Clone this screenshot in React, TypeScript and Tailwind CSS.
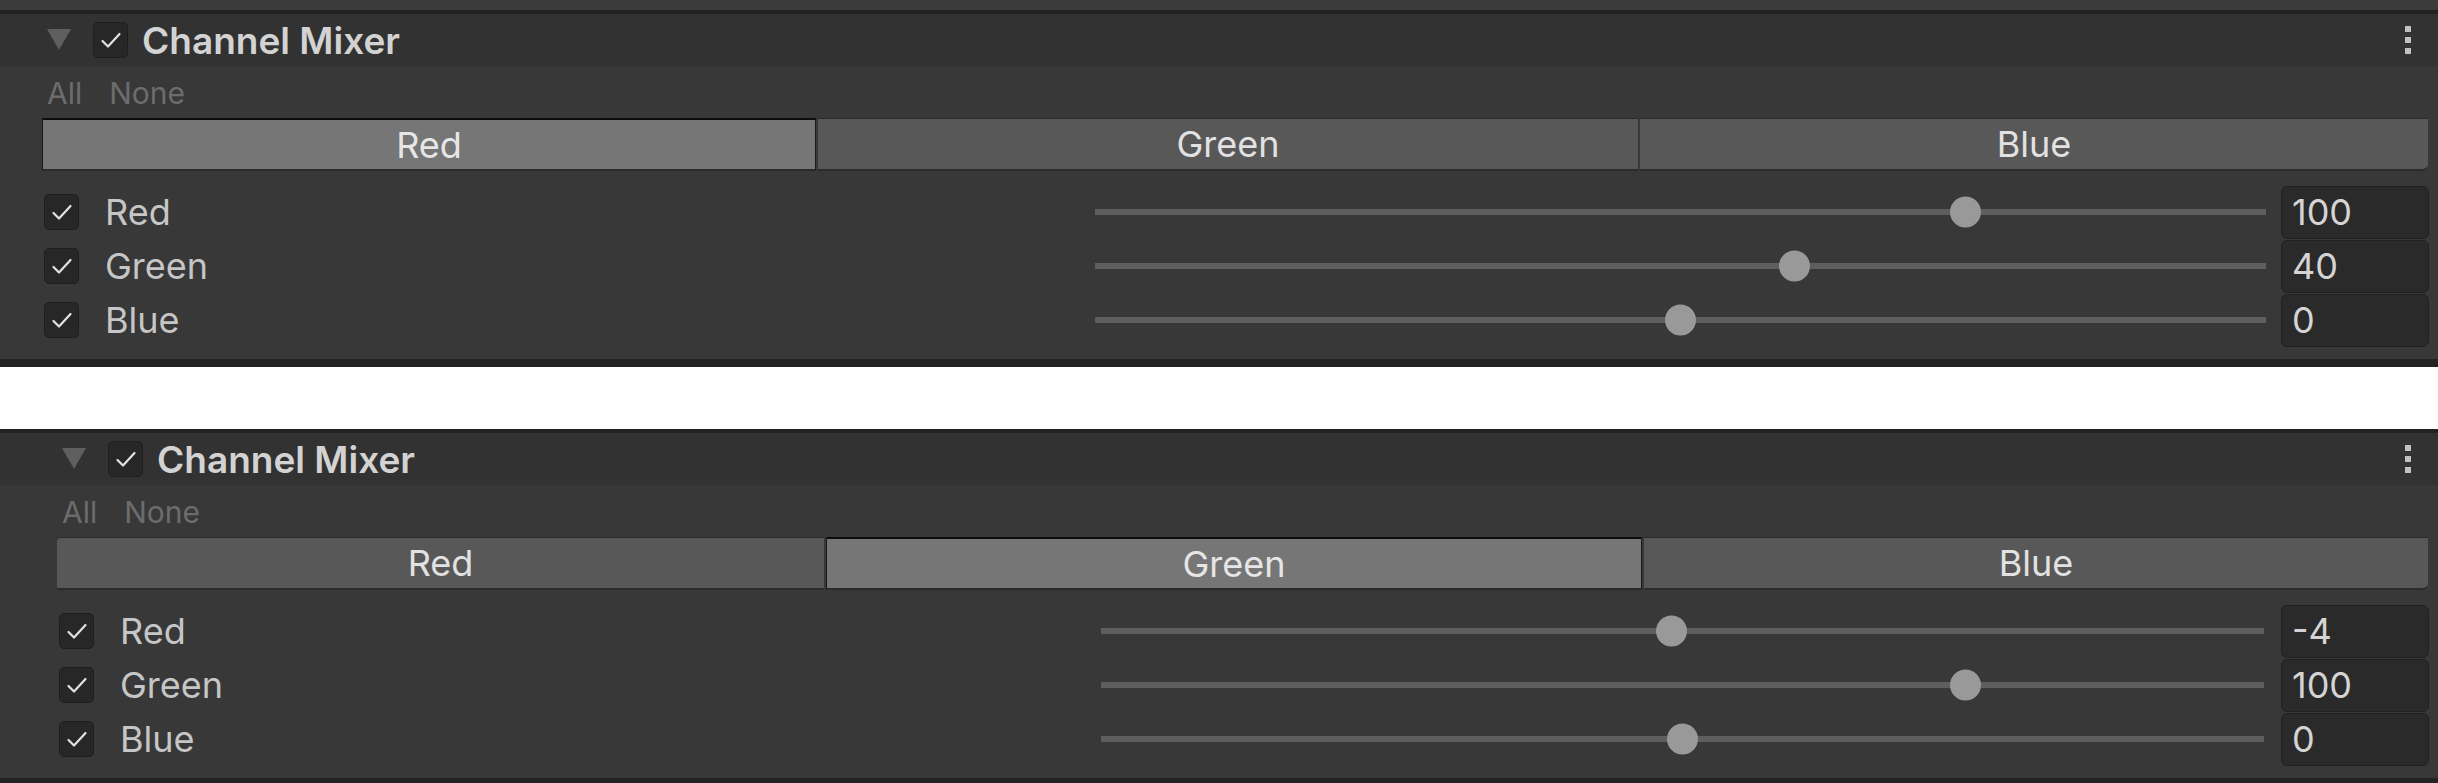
type Row = { label: string; value: number };

type PanelProps = {
  indent: number;
  tabWidths: number[];
  selected: number;
  rows: Row[];
  sliderStart: number;
  sliderEnd: number;
  topStrip?: boolean;
};

const TABS = ["Red", "Green", "Blue"];

function Check() {
  return (
    <div className="flex h-[36px] w-[35px] shrink-0 items-center justify-center rounded-[5px] border border-[#1e1e1e] bg-[#272727]">
      <svg width="22" height="18" viewBox="0 0 22 18" fill="none">
        <path d="M2.5 10 L8 15.5 L19.5 3" stroke="#e2e2e2" strokeWidth="2.2" strokeLinecap="round" strokeLinejoin="round" />
      </svg>
    </div>
  );
}

function Slider({ value }: { value: number }) {
  // range -200..200, thumb travels inside the track
  const t = (value + 200) / 400;
  return (
    <div className="relative h-[54px] flex-1">
      <div className="absolute left-0 right-0 top-1/2 h-[6px] -translate-y-1/2 bg-[#5e5e5e]" />
      <div
        className="absolute top-1/2 size-[31px] -translate-y-1/2 rounded-full bg-[#999999]"
        style={{ left: `calc(${t} * (100% - 31px))` }}
      />
    </div>
  );
}

function Panel({ indent, tabWidths, selected, rows, sliderStart, sliderEnd, topStrip }: PanelProps) {
  return (
    <div className="w-full">
      {topStrip && <div className="h-[10px] bg-[#3b3b3b]" />}
      <div className="h-[4px] bg-[#222222]" />

      <div className="flex h-[52px] items-center bg-[#323232] pr-[27px]" style={{ paddingLeft: 47 + indent }}>
        <svg width="24" height="21" viewBox="0 0 24 21" className="mt-[-2px]">
          <polygon points="0,0 24,0 12,21" fill="#5f5f5f" />
        </svg>
        <div className="ml-[22px]">
          <Check />
        </div>
        <span className="ml-[14px] text-[37px] font-semibold leading-none text-[#d3d3d3]">Channel Mixer</span>
        <div className="ml-auto flex flex-col gap-[5px]">
          <div className="size-[6px] bg-[#c2c2c2]" />
          <div className="size-[6px] bg-[#c2c2c2]" />
          <div className="size-[6px] bg-[#c2c2c2]" />
        </div>
      </div>

      <div className="bg-[#383838] pb-[12px] pt-[7px]">
        <div className="flex h-[40px] items-center gap-[27px] text-[30px] leading-none text-[#6c6c6c]" style={{ paddingLeft: 47 + indent }}>
          <span>All</span>
          <span>None</span>
        </div>

        <div className="mt-[5px] flex h-[53px] gap-[2px]" style={{ paddingLeft: 42 + indent }}>
          {TABS.map((t, i) => (
            <div
              key={t}
              className={
                i === selected
                  ? "flex items-center justify-center border-x border-t-2 border-b-2 border-[#1a1a1a] border-t-[#0c0c0c] border-b-[#2a2a2a] bg-[#767676] text-[36px] leading-none text-[#e6e6e6]"
                  : "flex items-center justify-center border-t border-b-2 border-[#2b2b2b] bg-[#585858] text-[36px] leading-none text-[#e2e2e2] " +
                    (i === 0 ? "rounded-tl-[4px] " : "") +
                    (i === 2 ? "rounded-br-[6px] " : "")
              }
              style={{ width: tabWidths[i] }}
            >
              {t}
            </div>
          ))}
        </div>

        <div className="mt-[14px] flex flex-col">
          {rows.map((r) => (
            <div key={r.label} className="flex h-[54px] items-center pr-[9px]" style={{ paddingLeft: 44 + indent }}>
              <div className="flex items-center" style={{ width: sliderStart - 44 - indent }}>
                <Check />
                <span className="ml-[26px] text-[36px] leading-none text-[#c6c6c6]">{r.label}</span>
              </div>
              <div className="flex flex-1 items-center" style={{ maxWidth: sliderEnd - sliderStart }}>
                <Slider value={r.value} />
              </div>
              <div className="ml-auto flex h-[53px] w-[148px] items-center rounded-[6px] border border-[#212121] bg-[#2a2a2a] pl-[10px] text-[36px] leading-none text-[#d4d4d4]">
                {r.value}
              </div>
            </div>
          ))}
        </div>
      </div>
      <div className="h-[8px] bg-[#232323]" />
    </div>
  );
}

export default function App() {
  return (
    <div className="h-[783px] w-[2438px] overflow-hidden bg-white" style={{ fontFamily: "Inter, 'Noto Sans', sans-serif" }}>
      <Panel
        topStrip
        indent={0}
        tabWidths={[774, 820, 788]}
        selected={0}
        sliderStart={1095}
        sliderEnd={2266}
        rows={[
          { label: "Red", value: 100 },
          { label: "Green", value: 40 },
          { label: "Blue", value: 0 },
        ]}
      />
      <div className="h-[62px]" />
      <Panel
        indent={15}
        tabWidths={[767, 816, 784]}
        selected={1}
        sliderStart={1101}
        sliderEnd={2264}
        rows={[
          { label: "Red", value: -4 },
          { label: "Green", value: 100 },
          { label: "Blue", value: 0 },
        ]}
      />
    </div>
  );
}
